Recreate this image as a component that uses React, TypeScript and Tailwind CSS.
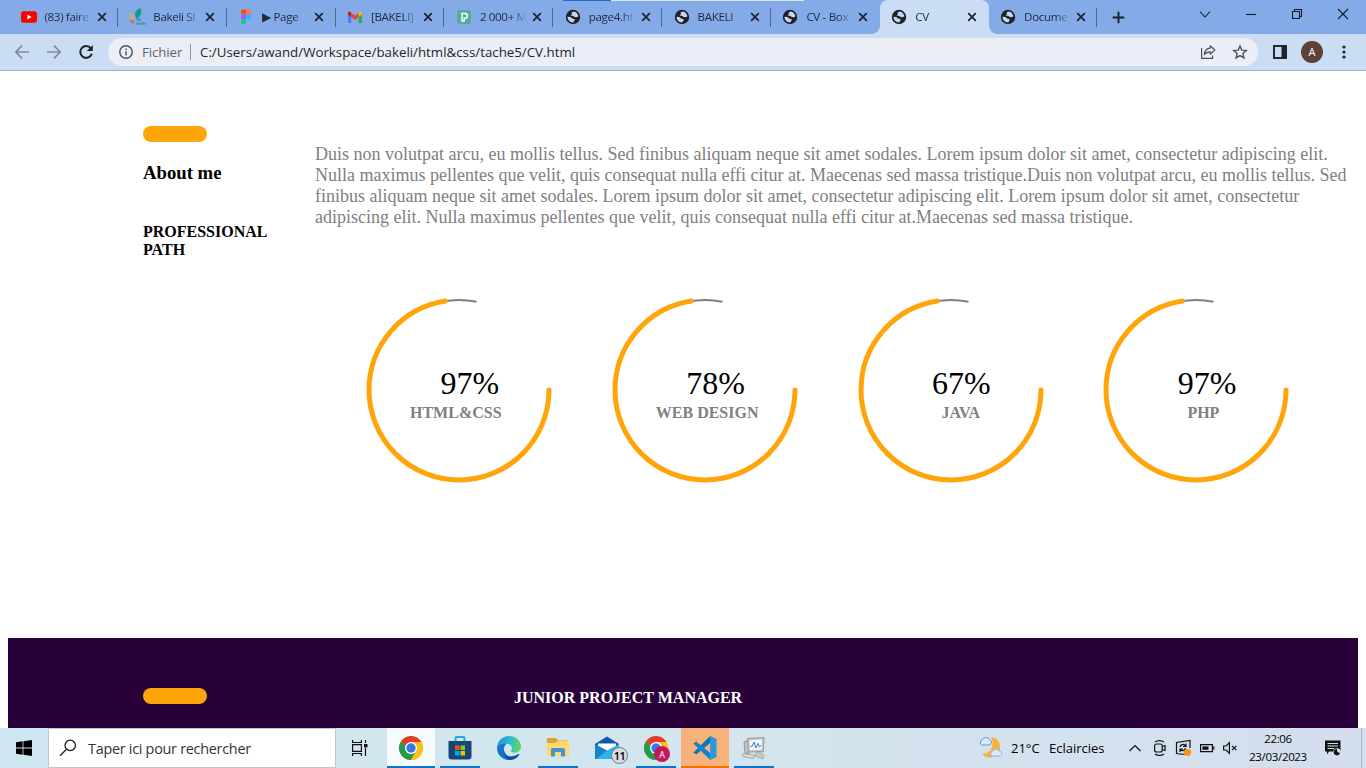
import React from "react";

const CHROME_FONT = "font-['Open_Sans','Noto_Sans',sans-serif]";

function Globe() {
  return (
    <svg width="16" height="16" viewBox="0 0 16 16">
      <circle cx="8" cy="8" r="7.2" fill="#202124" />
      <path d="M8.6 2.4 C6.8 2.8 6.2 4 6.8 4.8 C7.4 5.6 6 6 5.6 6.8 C6.6 7.2 8.2 6.6 9 7.6 C9.6 8.4 11.2 8.6 12 8 L13.4 7.6 C13.3 5 11.2 2.5 8.6 2.4Z" fill="#c3d5f3" />
      <path d="M2.5 7.8 C2.5 11 5 13.5 8.2 13.5 C8.8 12.6 8.6 12 9.6 11.4 C10.2 10.6 9.4 9.8 8 9.8 C6.6 9.6 6.4 8.2 5 8 Z" fill="#c3d5f3" />
    </svg>
  );
}

function YouTube() {
  return (
    <svg width="16" height="16" viewBox="0 0 16 16">
      <rect x="0" y="2.3" width="16" height="11.4" rx="2.6" fill="#f00" />
      <path d="M6.4 5.6 L10.6 8 L6.4 10.4Z" fill="#fff" />
    </svg>
  );
}

function BakeliLogo() {
  return (
    <svg width="18" height="18" viewBox="0 0 18 18">
      <path d="M6.5 8 C5 4 8 0 12 .6 C13.4 5 11 9 7.6 11.4Z" fill="#159b8d" />
      <path d="M1 5 C3 5 5 8 5 12 C2 11 0 8 1 5Z" fill="#e0a64c" />
      <path d="M1 12 C3 11 5 12 6 15 C3 16 1 15 1 12Z" fill="#c86f77" />
      <path d="M7 12.5 C9 10 12 10 13 11.6 C11 13 9 13.2 7 12.5Z" fill="#2f9bb0" />
      <path d="M7 15.6 H17" stroke="#3c98a9" strokeWidth="2.2" strokeDasharray="1.6 .5" />
    </svg>
  );
}

function Figma() {
  return (
    <svg width="16" height="16" viewBox="0 0 16 16">
      <path d="M8 .5 H5.4 a2.5 2.5 0 0 0 0 5 H8Z" fill="#f24e1e" />
      <path d="M8 .5 h2.6 a2.5 2.5 0 0 1 0 5 H8Z" fill="#ff7262" />
      <path d="M8 5.5 H5.4 a2.5 2.5 0 0 0 0 5 H8Z" fill="#a259ff" />
      <circle cx="10.5" cy="8" r="2.5" fill="#1abcfe" />
      <path d="M8 10.5 H5.4 a2.5 2.5 0 1 0 2.6 2.5Z" fill="#0acf83" />
    </svg>
  );
}

function Gmail() {
  return (
    <svg width="16" height="16" viewBox="0 0 16 16">
      <path d="M1 4 V14 H4.4 V6.5Z" fill="#4285f4" />
      <path d="M15 4 V14 H11.6 V6.5Z" fill="#34a853" />
      <path d="M11.6 4 L13 2.8 C14 2.1 15 2.8 15 4 V5.6 L11.6 8.2Z" fill="#fbbc04" />
      <path d="M4.4 4 L3 2.8 C2 2.1 1 2.8 1 4 V5.6 L4.4 8.2Z" fill="#c5221f" />
      <path d="M4.4 4 L8 6.7 L11.6 4 V8.2 L8 10.9 L4.4 8.2Z" fill="#ea4335" />
    </svg>
  );
}

function PexelsLogo() {
  return (
    <svg width="16" height="16" viewBox="0 0 16 16">
      <rect x="1" y="1" width="14" height="14" rx="2" fill="#58ad9a" />
      <path d="M6 12 V4.5 H9 A2.3 2.3 0 0 1 9 9.3 H8.2 V12Z" fill="none" stroke="#fff" strokeWidth="1.4" />
    </svg>
  );
}

function Cross() {
  return (
    <svg width="10" height="10" viewBox="0 0 10 10">
      <path d="M1.2 1.2 L8.8 8.8 M8.8 1.2 L1.2 8.8" stroke="#1d222b" strokeWidth="1.7" />
    </svg>
  );
}

type TabProps = {
  icon: React.ReactNode;
  title: string;
  active?: boolean;
  separator?: boolean;
};

function Tab({ icon, title, active, separator }: TabProps) {
  return (
    <div className={`relative flex h-[34px] w-[108.85px] shrink-0 items-center pl-[11.5px] ${active ? "rounded-t-lg bg-[#cbdcf5]" : ""}`}>
      {active && (
        <>
          <span className="absolute -left-2 bottom-0 size-2 bg-[radial-gradient(circle_at_0_0,#84abe8_7.5px,#cbdcf5_8px)]" />
          <span className="absolute -right-2 bottom-0 size-2 bg-[radial-gradient(circle_at_100%_0,#84abe8_7.5px,#cbdcf5_8px)]" />
        </>
      )}
      <span className="flex w-6 shrink-0 items-center">{icon}</span>
      <span className="w-[47px] overflow-hidden text-[11.6px] tracking-[-0.35px] whitespace-pre text-[#1f2a3c] [mask-image:linear-gradient(to_right,#000_32px,transparent_47px)]">{title}</span>
      <span className="ml-[5px]"><Cross /></span>
      {separator && <span className="absolute top-2 right-0 h-[19px] w-px bg-[#52698f]" />}
    </div>
  );
}

function TabStrip() {
  return (
    <div className="relative flex h-[34px] bg-[#84abe8] pl-[9px]">
      <div className="absolute top-0 left-[563px] h-px w-12 bg-[#1970cb]" />
      <div className="absolute top-0 left-[611px] h-px w-[193px] bg-[#dce9f5]" />
      <Tab icon={<YouTube />} title="(83) faire" separator />
      <Tab icon={<BakeliLogo />} title="Bakeli SI" separator />
      <Tab icon={<Figma />} title="▶ Page" separator />
      <Tab icon={<Gmail />} title="[BAKELI]" separator />
      <Tab icon={<PexelsLogo />} title="2 000+ M" separator />
      <Tab icon={<Globe />} title="page4.ht" separator />
      <Tab icon={<Globe />} title="BAKELI" separator />
      <Tab icon={<Globe />} title="CV - Box" />
      <Tab icon={<Globe />} title="CV" active />
      <Tab icon={<Globe />} title="Docume" separator />
      <svg className="mt-[11px] ml-[15px]" width="13" height="13" viewBox="0 0 13 13">
        <path d="M6.5 .7 V12.3 M.7 6.5 H12.3" stroke="#1d222b" strokeWidth="1.9" />
      </svg>
      <svg className="ml-auto" width="170" height="28" viewBox="0 0 170 28" fill="none" stroke="#151a22" strokeWidth="1.1">
        <path d="M4 11.5 L9 17 L14 11.5" />
        <path d="M50 14.5 H60" />
        <path d="M96.5 11.5 H103.5 V18.5 H96.5Z M98.5 11.5 V9.5 H105.5 V16.5 H103.5" />
        <path d="M142 9 L152 19 M152 9 L142 19" />
      </svg>
    </div>
  );
}

function Toolbar() {
  return (
    <div className="flex h-[37px] items-center border-b border-[#9fadc5] bg-[#cbdcf5]">
      <svg width="108" height="36" viewBox="0 0 108 36" fill="none" strokeWidth="1.7">
        <path d="M29 18 H16 M22 11.7 L15.8 18 L22 24.3" stroke="#7f8a9d" />
        <path d="M47 18 H60 M54 11.7 L60.2 18 L54 24.3" stroke="#7f8a9d" />
        <path d="M90.8 14.2 A5.9 5.9 0 1 0 91.8 19.7" stroke="#1d222b" strokeWidth="2" />
        <path d="M92.8 11 V17 H86.8Z" fill="#1d222b" />
      </svg>
      <div className="flex h-7 w-[1150px] items-center rounded-full bg-[#ebeef4] pl-[11px]">
        <svg width="14" height="14" viewBox="0 0 14 14" fill="none" stroke="#4d5156" strokeWidth="1.4">
          <circle cx="7" cy="7" r="6.2" />
          <path d="M7 6.2 V10.4 M7 3.5 V5" />
        </svg>
        <span className="ml-[9px] w-[48px] pt-0.5 text-[13.3px] tracking-[-0.1px] text-[#5f6368]">Fichier</span>
        <span className="h-4 w-px bg-[#8f959e]" />
        <span className="ml-[9px] pt-0.5 text-[13.3px] whitespace-nowrap text-[#23272e]">C:/Users/awand/Workspace/bakeli/html&amp;css/tache5/CV.html</span>
        <svg className="ml-auto" width="58" height="28" viewBox="0 0 58 28" fill="none" stroke="#4d5156" strokeWidth="1.2">
          <path d="M1.6 10 V20.4 H12.6 V17.5" />
          <path d="M10.2 7.8 L14.8 12 L10.2 16.2 V13.8 C7.5 13.8 5.6 14.6 4.3 16.6 C4.6 13.3 6.6 10.5 10.2 10.2Z" strokeLinejoin="round" />
          <path d="M40 8 L41.8 12.2 L46.3 12.6 L42.9 15.5 L43.9 19.9 L40 17.6 L36.1 19.9 L37.1 15.5 L33.7 12.6 L38.2 12.2Z" strokeWidth="1.4" />
        </svg>
      </div>
      <svg className="ml-[15px]" width="14" height="14" viewBox="0 0 14 14">
        <rect x="1" y="1" width="12" height="12" fill="none" stroke="#1d222b" strokeWidth="1.9" />
        <rect x="8.5" y="1" width="5" height="12" fill="#1d222b" />
      </svg>
      <span className="ml-[14px] flex size-[22px] items-center justify-center rounded-full bg-[#5d4037] text-[11px] text-white">A</span>
      <svg className="ml-[19px]" width="4" height="14" viewBox="0 0 4 14" fill="#1d222b">
        <circle cx="2" cy="2" r="1.6" />
        <circle cx="2" cy="7" r="1.6" />
        <circle cx="2" cy="12" r="1.6" />
      </svg>
    </div>
  );
}

type SkillProps = { value: string; name: string; labelClass: string };

function Skill({ value, name, labelClass }: SkillProps) {
  return (
    <div className="grid h-[190px] w-[245.8px] shrink-0">
      <svg className="col-start-1 row-start-1" width="190" height="190" viewBox="0 0 190 190" fill="none">
        <circle cx="95" cy="95" r="90" stroke="#808080" strokeWidth="2" strokeDasharray="441 600" />
        <circle cx="95" cy="95" r="90" stroke="#ffa50a" strokeWidth="5" strokeLinecap="round" strokeDasharray="409.6 600" />
      </svg>
      <div className="col-start-1 row-start-1 pt-[70px]">
        <div className="pl-[76.4px] text-[32px] leading-[37px] text-black">{value}</div>
        <div className={`pt-0.5 text-[16px] leading-[18px] font-bold whitespace-nowrap text-[#808080] ${labelClass}`}>{name}</div>
      </div>
    </div>
  );
}

function Page() {
  return (
    <main className="flex h-[657px] flex-col bg-white px-2 font-['Liberation_Serif',serif] text-black">
      <div className="flex h-[213px] pl-[135px]">
        <div className="w-[172px] pt-[55px] font-bold">
          <div className="h-4 w-16 rounded-full bg-[#ffa50a]" />
          <h2 className="mt-5 text-[18.72px] leading-[21px]">About me</h2>
          <h3 className="mt-[40px] w-32 text-[16px] leading-[18px]">PROFESSIONAL PATH</h3>
        </div>
        <p className="pt-[73px] text-[18px] leading-[21px] whitespace-nowrap text-[#808080]">
          Duis non volutpat arcu, eu mollis tellus. Sed finibus aliquam neque sit amet sodales. Lorem ipsum dolor sit amet, consectetur adipiscing elit.<br />
          Nulla maximus pellentes que velit, quis consequat nulla effi citur at. Maecenas sed massa tristique.Duis non volutpat arcu, eu mollis tellus. Sed<br />
          finibus aliquam neque sit amet sodales. Lorem ipsum dolor sit amet, consectetur adipiscing elit. Lorem ipsum dolor sit amet, consectetur<br />
          adipiscing elit. Nulla maximus pellentes que velit, quis consequat nulla effi citur at.Maecenas sed massa tristique.
        </p>
      </div>
      <div className="mt-[11px] flex pl-[356px]">
        <Skill value="97%" name="HTML&CSS" labelClass="pl-[46px]" />
        <Skill value="78%" name="WEB DESIGN" labelClass="pl-[46px]" />
        <Skill value="67%" name="JAVA" labelClass="pl-[86px]" />
        <Skill value="97%" name="PHP" labelClass="pl-[86px]" />
      </div>
      <div className="mt-auto flex h-[90px] bg-[#28003a] pt-[50px] pl-[135px]">
        <div className="h-4 w-16 rounded-full bg-[#ffa50a]" />
        <h3 className="ml-[307px] pt-px text-[16px] leading-[18px] font-bold text-white">JUNIOR PROJECT MANAGER</h3>
      </div>
    </main>
  );
}

function ChromeLogo() {
  return (
    <svg width="26" height="26" viewBox="0 0 26 26">
      <circle cx="13" cy="13" r="12" fill="#fbc116" />
      <path d="M13 13 L2.6 7 A12 12 0 0 1 23.4 7Z" fill="#dd3c2e" />
      <path d="M13 13 L2.6 7 A12 12 0 0 0 13 25 L18.2 16Z" fill="#249a4b" />
      <path d="M13 7 H23.4 A12 12 0 0 1 13 25 L18.2 16Z" fill="#fbc116" />
      <circle cx="13" cy="13" r="6" fill="#fff" />
      <circle cx="13" cy="13" r="4.7" fill="#3478e5" />
    </svg>
  );
}

function StoreLogo() {
  return (
    <svg width="26" height="26" viewBox="0 0 26 26">
      <path d="M8.5 7 V3 a1 1 0 0 1 1 -1 h7 a1 1 0 0 1 1 1 V7" fill="none" stroke="#2aa9e0" strokeWidth="2" />
      <path d="M1.5 6 H24.5 V21.5 a3 3 0 0 1 -3 3 H4.5 a3 3 0 0 1 -3 -3Z" fill="#174773" />
      <path d="M8 10.5h4.5v4.5H8z" fill="#f1511b" />
      <path d="M13.5 10.5H18v4.5h-4.5z" fill="#80cc28" />
      <path d="M8 16h4.5v4.5H8z" fill="#00adef" />
      <path d="M13.5 16H18v4.5h-4.5z" fill="#fbbc09" />
    </svg>
  );
}

function EdgeLogo() {
  return (
    <svg width="26" height="26" viewBox="0 0 26 26">
      <defs>
        <linearGradient id="edgeTop" x1="0" x2="1" y1=".3" y2=".5">
          <stop offset="0" stopColor="#1b92d8" />
          <stop offset=".5" stopColor="#2bbdd5" />
          <stop offset="1" stopColor="#63d655" />
        </linearGradient>
      </defs>
      <path d="M1 13 A12 12 0 0 1 13 1 C20 1 25 6 25 11.5 C25 15.5 22 17.5 18.6 17.5 C15.8 17.5 14.6 16.5 15.2 15.4 C17.2 12.8 15 9 11 8.4 C6 7.8 2 10 1 13Z" fill="url(#edgeTop)" />
      <path d="M1 13 C2 9.4 6.5 7.8 11 8.4 C8.6 10 7.4 12.5 8 15.6 C8.8 20.5 14 23 19.5 20.6 C21 20 22.6 18.8 23.4 19 C21 23 17.6 25 13 25 A12 12 0 0 1 1 13Z" fill="#1476ca" />
      <path d="M11 8.4 C7 11 7.4 16 9 18.6 C11.4 22.5 16 22 19.5 20.6 C22 19.6 23.6 18.4 23.4 19.2 C21 23.4 17 25 13 25 C7.6 22.4 5 12.6 11 8.4Z" fill="#13529b" />
    </svg>
  );
}

function FolderLogo() {
  return (
    <svg width="26" height="26" viewBox="0 0 26 26">
      <path d="M2 3 H11 L13 5.5 H23 V10 H2Z" fill="#dea32c" />
      <path d="M2 8 H10 L12.5 6 H24 V21 H2Z" fill="#ffd86d" />
      <path d="M6 21 V14.5 a1.5 1.5 0 0 1 1.5 -1.5 H18.5 a1.5 1.5 0 0 1 1.5 1.5 V21.5 H16 V17 H10 V21.5 H6Z" fill="#4993cf" />
    </svg>
  );
}

function MailLogo() {
  return (
    <svg width="26" height="26" viewBox="0 0 26 26">
      <path d="M1 9 L13 1.5 L25 9 V12 H1Z" fill="#0d58a8" />
      <path d="M4 8.6 H22 V14 L13 19 L4 14Z" fill="#fff" />
      <path d="M1 9 L13 15.5 V24 H1Z" fill="#1486cf" />
      <path d="M25 9 L13 15.5 L2 24 H25Z" fill="#32b2ec" />
    </svg>
  );
}

function CodeLogo() {
  return (
    <svg width="26" height="26" viewBox="0 0 26 26">
      <path d="M18.2 1 L24.5 4 V22 L18.2 25Z" fill="#2699df" />
      <path d="M18.2 1 V8 L4.2 19.6 L1.4 17.5Z" fill="#0878bc" />
      <path d="M18.2 25 V18 L4.2 6.4 L1.4 8.5Z" fill="#1183cb" />
    </svg>
  );
}

function MonitorLogo() {
  return (
    <svg width="26" height="26" viewBox="0 0 26 26">
      <path d="M3 7 L8 5 V19 L4 18Z" fill="#c4c3bc" stroke="#99988f" />
      <path d="M2 18.5 L14 20.5 L12 23.5 L2 21.5Z" fill="#dededa" stroke="#999" strokeWidth=".8" />
      <path d="M6.5 3.5 L23 2.5 L22.4 16.5 L7.4 17Z" fill="#c9c9c4" stroke="#9b9b96" />
      <path d="M8.5 5.4 L21 4.5 L20.5 14.6 L9 15Z" fill="#f4faff" />
      <path d="M9.4 11.4 L11.2 11.4 L13 7 L14.8 13 L17 8.4 L18.4 12.2 L20.4 10" stroke="#3285c0" fill="none" />
      <path d="M15 17 L20 17 L23 20.5 L22 24 L14 21Z" fill="#c9c9c4" stroke="#999" strokeWidth=".6" />
    </svg>
  );
}

type TaskProps = { children: React.ReactNode; box: string; bar?: string };

function Task({ children, box, bar }: TaskProps) {
  return (
    <div className={`relative flex h-10 shrink-0 items-center justify-center ${box}`}>
      {children}
      {bar && <span className={`absolute bottom-0 left-0 h-0.5 w-full ${bar}`} />}
    </div>
  );
}

function Taskbar() {
  return (
    <footer className="flex h-10 items-center bg-[linear-gradient(90deg,#cfe7f0,#d3e5ee_50%,#d4deee)] text-black">
      <div className="flex w-12 shrink-0 justify-center">
        <svg width="16" height="16" viewBox="0 0 16 16">
          <path d="M0 2.2 L6.6 1.3 V7.5 H0Z M7.4 1.2 L16 0 V7.5 H7.4Z M0 8.4 H6.6 V14.7 L0 13.8Z M7.4 8.4 H16 V16 L7.4 14.8Z" />
        </svg>
      </div>
      <div className="flex h-10 w-[288px] shrink-0 items-center border border-[#c2c6c9] bg-white pl-[10px]">
        <svg width="18" height="18" viewBox="0 0 18 18" fill="none" stroke="#1c1c1c" strokeWidth="1.3">
          <circle cx="11.2" cy="6.4" r="5.2" />
          <path d="M7.5 10.2 L1 16.8" />
        </svg>
        <span className="ml-[11px] pt-0.5 text-[14.4px] tracking-[-0.27px] whitespace-nowrap text-[#333]">Taper ici pour rechercher</span>
      </div>
      <div className="flex w-[51px] shrink-0 justify-center pr-[3px]">
        <svg width="18" height="16" viewBox="0 0 18 16" fill="none" stroke="#111" strokeWidth="1.2">
          <path d="M1.6 0 V2.5 H10.4 V0 M1.6 16 V13.5 H10.4 V16 M1.6 4.6 H10.4 V11.4 H1.6Z M14.5 0 V3 M14.5 8 V16" />
          <path d="M13 4 H16.5 V7.4 H13Z" fill="#111" stroke="none" />
        </svg>
      </div>
      <Task box="w-12 bg-[#f5fafc]" bar="bg-[#0a74ce]"><ChromeLogo /></Task>
      <Task box="ml-[5px] w-10" bar="bg-[#0a74ce]"><StoreLogo /></Task>
      <Task box="ml-[9px] w-10"><EdgeLogo /></Task>
      <Task box="ml-[9px] w-10" bar="bg-[#0a74ce]"><FolderLogo /></Task>
      <Task box="ml-[9px] w-10">
        <MailLogo />
        <span className="absolute top-[19px] left-[24px] flex size-[17px] items-center justify-center rounded-full border border-[#777] bg-[#d6dde1] text-[11px] leading-none font-semibold tracking-[-0.5px]">11</span>
      </Task>
      <Task box="ml-[9px] w-10" bar="bg-[#0a74ce]">
        <ChromeLogo />
        <span className="absolute top-[18px] left-[18px] flex size-4 items-center justify-center rounded-full bg-[#c2185b] text-[9px] leading-none text-white">A</span>
      </Task>
      <Task box="ml-[5px] w-12 bg-[#f7b27c]" bar="bg-[#f57000]"><CodeLogo /></Task>
      <Task box="ml-[5px] w-10" bar="bg-[#0a74ce]"><MonitorLogo /></Task>
      <div className="ml-auto flex h-10 w-[388px] shrink-0 items-center">
        <svg width="26" height="26" viewBox="0 0 26 26">
          <path d="M13 2 C20 3 24 9 21.5 15.5 C18.5 23 9 25 4 19 C13 19 17 10 13 2Z" fill="#f6b044" />
          <path d="M4 10 a3 3 0 0 1 .6 -5.6 a4 4 0 0 1 7 .3 a2.8 2.8 0 0 1 0 5.3Z" fill="#d9e8fb" stroke="#6795d2" />
          <path d="M14 21 a2.6 2.6 0 0 1 .5 -4.8 a3.8 3.8 0 0 1 6.8 0 a2.5 2.5 0 0 1 1 4.8Z" fill="#dbe8fb" stroke="#94b3e0" />
        </svg>
        <span className="ml-[7px] w-[38px] pt-px text-[13px] whitespace-nowrap">21°C</span>
        <span className="w-[78px] pt-px text-[13px] whitespace-nowrap">Eclaircies</span>
        <svg width="114" height="24" viewBox="0 0 114 24" fill="none" stroke="#111" strokeWidth="1.2">
          <path d="M2.5 15 L8 9.5 L13.5 15" />
          <path d="M28 6 Q32.5 3.2 37 6 M28 18 Q32.5 20.8 37 18" />
          <rect x="27.6" y="8" width="7.6" height="8" rx="2" />
          <path d="M35.2 10.5 L38 9.5 V14.5 L35.2 13.5" />
          <path d="M63 12 V4.5 L49.5 6.5 V17.5 L58 18.5" />
          <path d="M53 11 Q54 8 57 8.5 L59 10 M59 7.5 V10.4 H56 M58.5 12 Q58 15 55 14.6 L53 13.5 M53 16 V13 H56" />
          <circle cx="60.5" cy="16.5" r="3.6" fill="#f7941d" stroke="none" />
          <path d="M73.6 8.6 H85.4 V15.6 H73.6Z M86.8 10.5 V13.5" />
          <path d="M75.4 10.4 H81.5 V13.8 H75.4Z" fill="#111" stroke="none" />
          <path d="M96.6 10 H99 L102.4 6.6 V17.4 L99 14 H96.6Z" />
          <path d="M105 9.8 L109.4 14.2 M109.4 9.8 L105 14.2" />
        </svg>
        <div className="w-[74px] text-center text-[11.5px] leading-[18px] tracking-[-0.33px]">
          <div>22:06</div>
          <div>23/03/2023</div>
        </div>
        <svg className="ml-[9px]" width="18" height="18" viewBox="0 0 18 18">
          <path d="M1 1.5 H16.5 V12.5 H5 L3 15.5 V12.5 H1Z" fill="#111" />
          <path d="M3.5 4.5 H14 M3.5 7 H14 M3.5 9.5 H10" stroke="#d4deee" />
          <circle cx="13" cy="13" r="3.8" fill="#d4deee" />
          <path d="M13 10 A3.2 3.2 0 1 0 16 14 A3.5 3.5 0 0 1 13 10Z" fill="#111" />
        </svg>
        <span className="ml-auto mr-1 h-10 w-px bg-[#a8b3c2]" />
      </div>
    </footer>
  );
}

export default function App() {
  return (
    <div className={`h-[768px] w-[1366px] overflow-hidden bg-white ${CHROME_FONT}`}>
      <TabStrip />
      <Toolbar />
      <Page />
      <Taskbar />
    </div>
  );
}
